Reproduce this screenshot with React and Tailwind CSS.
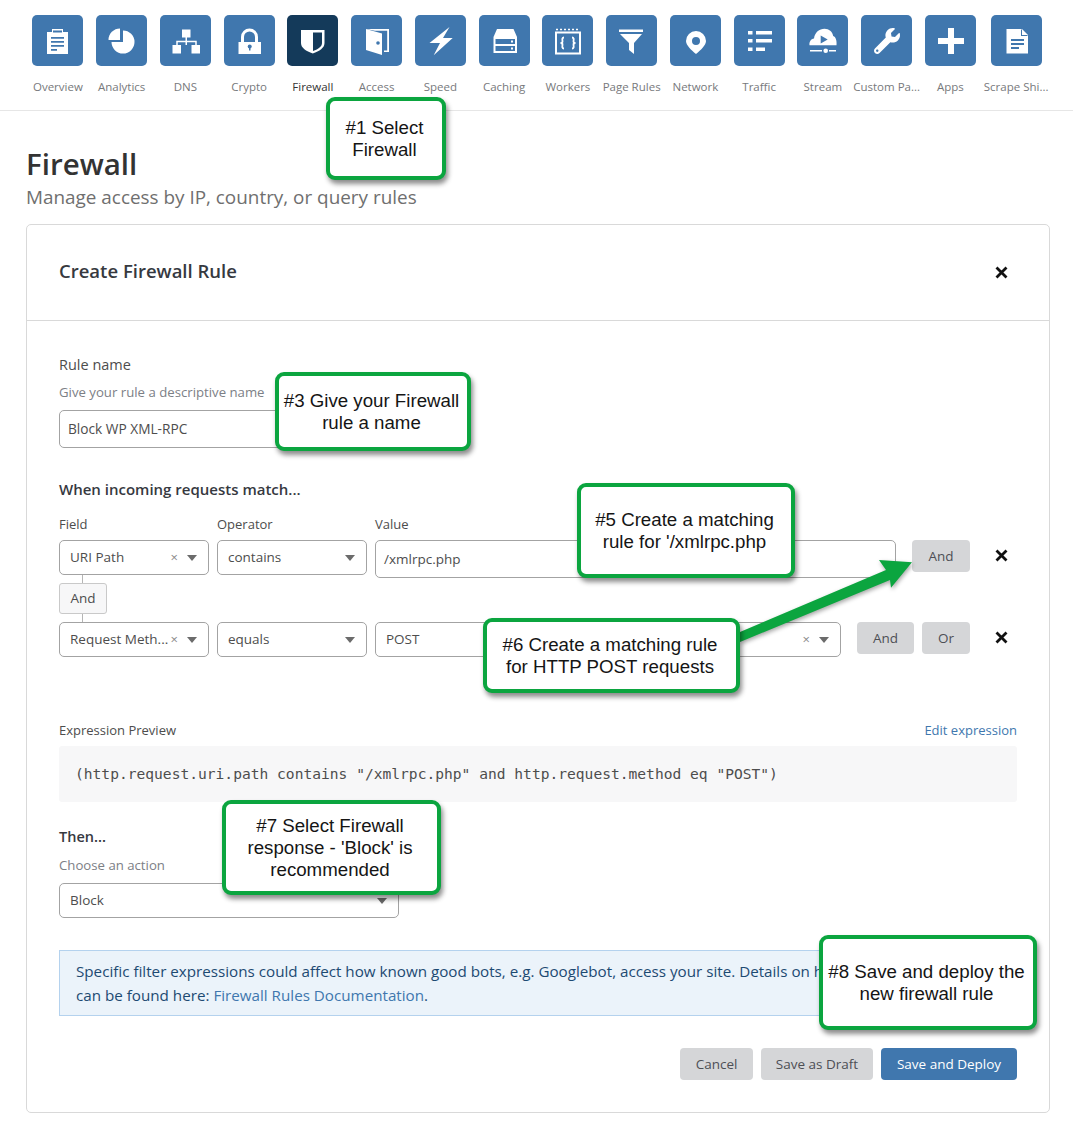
import React from 'react';
import { FaWrench } from 'react-icons/fa';

const blue = '#4077ae';

const icons = {
  overview: (
    <>
      <path fill="#fff" d="M15 17h5v-3h11v3h5v22H15z" />
      <path fill={blue} d="M21 15.500h9v2h-9zM19 22h13v1.800H19zM19 26h13v1.800H19zM19 30h13v1.800H19zM19 34h6v1.800h-6z" />
    </>
  ),
  analytics: (
    <>
      <path fill="#fff" d="M27 15.500a11.500 11.500 0 1 1-11.500 11.500H27z" />
      <path fill="#fff" d="M12.500 25A11.500 11.500 0 0 1 24 13.500V25z" />
    </>
  ),
  dns: (
    <>
      <path fill="#fff" d="M22 14.500h8.500v8H22zM12.500 30H21v8.500h-8.500zM31.500 30H40v8.500h-8.500z" />
      <path stroke="#fff" strokeWidth="1.500" fill="none" d="M26.250 22v8M17 30v-3.500h19V30" />
    </>
  ),
  crypto: (
    <>
      <path fill="none" stroke="#fff" strokeWidth="3" d="M18.500 28v-6a7 7 0 0 1 14 0v6" />
      <path fill="#fff" d="M14.500 27h22.500v12H14.500z" />
      <circle cx="25.700" cy="31.500" r="2" fill={blue} />
      <path fill={blue} d="M25 32h1.500v3.500H25z" />
    </>
  ),
  firewall: (
    <>
      <path fill="#fff" d="M14 15h23.500v13c0 5-5 8-11.700 10.500C19 36 14 33 14 28z" />
      <path fill="#143a5a" d="M26 17.500h9v10.500c0 3.500-3.500 6-9 8z" />
    </>
  ),
  access: (
    <>
      <path fill="#fff" d="M15 14h23v23h-5v-1.500h3.200V15.800H24l-9-1.800z" />
      <path fill="#fff" d="M15 14l16 4.500V40l-16-5z" />
      <circle cx="27" cy="28" r="1.800" fill={blue} />
    </>
  ),
  speed: <path fill="#fff" d="M34.500 12L14.500 28H25l-6.300 12.300L37.700 23H28z" />,
  caching: (
    <>
      <path fill="#fff" d="M18 14h16.500l3.500 8H14.500z" />
      <path fill="#fff" fillRule="evenodd" d="M14.500 22H38v16H14.500zM16.500 24v5H36v-5zM16.500 31v5H36v-5z" />
      <path fill="#fff" d="M32 25.500h2v2h-2zM32 32.500h2v2h-2z" />
    </>
  ),
  workers: (
    <>
      <path fill="none" stroke="#fff" strokeWidth="2" d="M14 17.500h24v21H14z" />
      <path fill="none" stroke="#fff" strokeWidth="1.500" strokeDasharray="2 2" d="M14 14.500h24" />
      <path fill="none" stroke="#fff" strokeWidth="1.800" d="M22 22.500c-2.500 0-1.500 2.500-1.500 4s-1 1.500-2 1.500c1 0 2 0 2 1.500s-1 4 1.500 4M30 22.500c2.500 0 1.500 2.500 1.500 4s1 1.500 2 1.500c-1 0-2 0-2 1.500s1 4-1.500 4" />
    </>
  ),
  rules: (
    <>
      <path fill="#fff" d="M13 14.500h24v2.500H13z" />
      <path fill="#fff" d="M14 19h22l-8 9v11l-5-4v-7z" />
    </>
  ),
  network: (
    <path fill="#fff" fillRule="evenodd" d="M26 16a10 10 0 0 1 10 10c0 4-5 9-10 13-5-4-10-9-10-13a10 10 0 0 1 10-10zm0 6a4 4 0 1 0 0 8 4 4 0 0 0 0-8z" />
  ),
  traffic: (
    <path fill="#fff" d="M14 16h4.500v3.500H14zM22 16h16v3.500H22zM14 24h4.500v3.500H14zM22 24h16v3.500H22zM14 32.500h4.500V36H14zM22 32.500h9V36h-9z" />
  ),
  stream: (
    <>
      <path fill="#fff" d="M12.500 30.300c-.5-3.500 1.500-6.500 4.500-6.800.8-6 5.300-9.700 10.500-9.700 4.500 0 8 3 8.700 7.200 2.500.8 3.800 4.500 3.300 9.300z" />
      <path fill={blue} d="M23.700 20.500l7 4-7 4z" />
      <path fill="none" stroke="#fff" strokeWidth="1.500" d="M13 35.700h12M32 35.700h7" />
      <circle cx="28.700" cy="35.700" r="2.300" fill="#fff" />
    </>
  ),
  plus: <path fill="#fff" d="M23 13h6v10h10v6H29v10h-6V29H13v-6h10z" />,
  shield: (
    <>
      <path fill="#fff" d="M15.500 14H31l6 6v18.500H15.500z" />
      <path fill={blue} d="M30 14.500V21h6.500v-1H31v-5.500zM20 24h13v2H20zM20 28h13v2H20zM20 32h8v2h-8z" />
    </>
  ),
};

const navItems = [
  ['Overview', 'overview'],
  ['Analytics', 'analytics'],
  ['DNS', 'dns'],
  ['Crypto', 'crypto'],
  ['Firewall', 'firewall'],
  ['Access', 'access'],
  ['Speed', 'speed'],
  ['Caching', 'caching'],
  ['Workers', 'workers'],
  ['Page Rules', 'rules'],
  ['Network', 'network'],
  ['Traffic', 'traffic'],
  ['Stream', 'stream'],
  ['Custom Pa...', 'wrench'],
  ['Apps', 'plus'],
  ['Scrape Shi...', 'shield'],
];

const NavItem = ({ label, icon }) => {
  const active = label === 'Firewall';
  return (
    <div className="w-[63.750px] last:ml-[2px] flex flex-col items-center shrink-0">
      <div className={`w-[51px] h-[51px] rounded-[5px] flex items-center justify-center ${active ? 'bg-[#143a5a]' : 'bg-[#4077ae]'}`}>
        {icon === 'wrench' ? (
          <FaWrench className="text-white w-[26px] h-[26px]" />
        ) : (
          <svg width="51" height="51" viewBox="0 0 51 51">{icons[icon]}</svg>
        )}
      </div>
      <span className={`mt-[13px] text-[11.500px] leading-[16px] whitespace-nowrap ${active ? 'text-[#333]' : 'text-[#77797c]'}`}>{label}</span>
    </div>
  );
};

const Caret = () => <span className="w-0 h-0 border-x-[5px] border-x-transparent border-t-[6px] border-t-[#6b6b6b]" />;

const Select = ({ value, width, clear }) => (
  <div className={`${width} h-[35px] shrink-0 bg-white border border-[#a3a3a3] rounded-[5px] pl-[10px] pr-[11px] flex items-center text-[13.500px] text-[#4d4d4d]`}>
    <span className="flex-1 whitespace-nowrap overflow-hidden">{value}</span>
    {clear && <span className="text-[13px] leading-none text-[#8a8a8a] mr-[9px]">×</span>}
    <Caret />
  </div>
);

const Btn = ({ children, width, className = 'bg-[#d5d6d8] text-[#4d4f55]' }) => (
  <button className={`${width} h-[32px] rounded-[4px] text-[13.500px] shrink-0 ${className}`}>{children}</button>
);

const CloseX = () => (
  <svg width="13" height="13" viewBox="0 0 13 13" className="shrink-0">
    <path d="M1.500 1.500l10 10M11.500 1.500l-10 10" stroke="#111" strokeWidth="2.800" />
  </svg>
);

const Callout = ({ className, children }) => (
  <div className={`absolute bg-white border-[4px] border-[#0ba53f] rounded-[9px] shadow-[2px_4px_5px_rgba(0,0,0,0.45)] pr-[3px] flex items-center justify-center text-center text-[18.700px] leading-[22px] text-[#151515] font-['Liberation_Sans',Arial,sans-serif] ${className}`}>
    <div>{children}</div>
  </div>
);

export default function App() {
  return (
    <div className="relative w-[1073px] h-[1127px] overflow-hidden bg-white font-['Open_Sans',sans-serif] text-[#4d4d4d]">
      <nav className="h-[111px] border-b border-[#e6e6e6] pl-[26px] pt-[15px] flex">
        {navItems.map(([label, icon]) => (
          <NavItem key={label} label={label} icon={icon} />
        ))}
      </nav>

      <main className="pl-[26px] w-[1050px]">
        <h1 className="mt-[33px] text-[29.500px] leading-[40px] font-semibold text-[#333]">Firewall</h1>
        <p className="text-[18.900px] leading-[26px] text-[#6f6f6f]">Manage access by IP, country, or query rules</p>

        <section className="mt-[14px] h-[889px] border border-[#d9d9d9] rounded-[5px]">
          <header className="h-[96px] border-b border-[#d9d9d9] pl-[32px] pr-[41px] flex items-center justify-between">
            <h2 className="text-[18.500px] -mt-[4px] font-semibold text-[#36393f]">Create Firewall Rule</h2>
            <CloseX />
          </header>

          <div className="pl-[32px] pr-[32px]">
            <label className="block mt-[34px] text-[14.500px] leading-[20px]">Rule name</label>
            <p className="mt-[8px] text-[13.200px] leading-[18px] text-[#7c8086]">Give your rule a descriptive name</p>
            <div className="mt-[9px] w-[340px] h-[38px] border border-[#a3a3a3] rounded-[5px] pl-[8px] flex items-center text-[13.700px]">Block WP XML-RPC</div>

            <h3 className="mt-[31px] text-[15px] leading-[20px] font-semibold text-[#36393f]">When incoming requests match...</h3>

            <div className="mt-[16px] flex gap-2 text-[13px] leading-[18px]">
              <span className="w-[150px]">Field</span>
              <span className="w-[150px]">Operator</span>
              <span>Value</span>
            </div>

            <div className="mt-[7px] h-[35px] flex items-start gap-2">
              <Select value="URI Path" width="w-[150px]" clear />
              <Select value="contains" width="w-[150px]" />
              <div className="w-[521px] h-[38px] shrink-0 border border-[#a3a3a3] rounded-[5px] pl-[8px] flex items-center text-[13.500px]">/xmlrpc.php</div>
              <Btn width="w-[58px] ml-[8px]">And</Btn>
              <div className="ml-[17px] mt-[9px]"><CloseX /></div>
            </div>

            <div className="ml-[23px] w-px h-[8px] bg-[#b5b5b5]" />
            <div className="w-[48px] h-[31px] border border-[#c9c9c9] bg-[#f7f7f8] rounded-[3px] flex items-center justify-center text-[13.500px]">And</div>
            <div className="ml-[23px] w-px h-[8px] bg-[#b5b5b5]" />

            <div className="flex items-start gap-2">
              <Select value="Request Meth..." width="w-[150px]" clear />
              <Select value="equals" width="w-[150px]" />
              <Select value="POST" width="w-[466px]" clear />
              <Btn width="w-[57px] ml-[8px]">And</Btn>
              <Btn width="w-[48px]">Or</Btn>
              <div className="ml-[17px] mt-[9px]"><CloseX /></div>
            </div>

            <div className="mt-[64px] w-[958px] flex justify-between text-[13px] leading-[18px]">
              <span>Expression Preview</span>
              <span className="text-[#4077ae]">Edit expression</span>
            </div>
            <div className="mt-[7px] w-[958px] h-[56px] rounded-[3px] bg-[#f7f7f8] pl-[16px] flex items-center font-['DejaVu_Sans_Mono',monospace] text-[14.600px] whitespace-nowrap">
              (http.request.uri.path contains "/xmlrpc.php" and http.request.method eq "POST")
            </div>

            <h3 className="mt-[25px] text-[14.500px] leading-[20px] font-semibold text-[#36393f]">Then...</h3>
            <p className="mt-[9px] text-[13.200px] leading-[18px] text-[#7c8086]">Choose an action</p>
            <div className="mt-[9px]"><Select value="Block" width="w-[340px]" /></div>

            <div className="mt-[32px] w-[958px] h-[66px] border border-[#b4d2ee] bg-[#ebf3fa] pl-[16px] flex flex-col justify-center text-[15.200px] leading-[24px] text-[#1d4a72] whitespace-nowrap">
              <p>Specific filter expressions could affect how known good bots, e.g. Googlebot, access your site. Details on how to use</p>
              <p>can be found here: <a className="text-[#4077ae]">Firewall Rules Documentation</a>.</p>
            </div>

            <div className="mt-[32px] w-[958px] flex justify-end gap-2">
              <Btn width="w-[73px]">Cancel</Btn>
              <Btn width="w-[112px]">Save as Draft</Btn>
              <Btn width="w-[136px]" className="bg-[#4077ae] text-white">Save and Deploy</Btn>
            </div>
          </div>
        </section>
      </main>

      <svg width="190" height="100" viewBox="0 0 190 100" className="absolute left-[735px] top-[555px] drop-shadow-[1px_2px_2px_rgba(0,0,0,0.35)]">
        <path fill="#0ba53f" d="M5 77L151 15 144 5 177 7.300 156 32.700 155 25 5 87z" />
      </svg>

      <Callout className="left-[326px] top-[97px] w-[120px] h-[83px]">#1 Select<br />Firewall</Callout>
      <Callout className="left-[275px] top-[372px] w-[196px] h-[79px]">#3 Give your Firewall<br />rule a name</Callout>
      <Callout className="left-[577px] top-[483px] w-[218px] h-[95px]">#5 Create a matching<br />rule for '/xmlrpc.php</Callout>
      <Callout className="left-[483px] top-[618px] w-[257px] h-[75px]">#6 Create a matching rule<br />for HTTP POST requests</Callout>
      <Callout className="left-[222px] top-[800px] w-[219px] h-[95px]">#7 Select Firewall<br />response - 'Block' is<br />recommended</Callout>
      <Callout className="left-[819px] top-[935px] w-[218px] h-[95px]">#8 Save and deploy the<br />new firewall rule</Callout>
    </div>
  );
}
